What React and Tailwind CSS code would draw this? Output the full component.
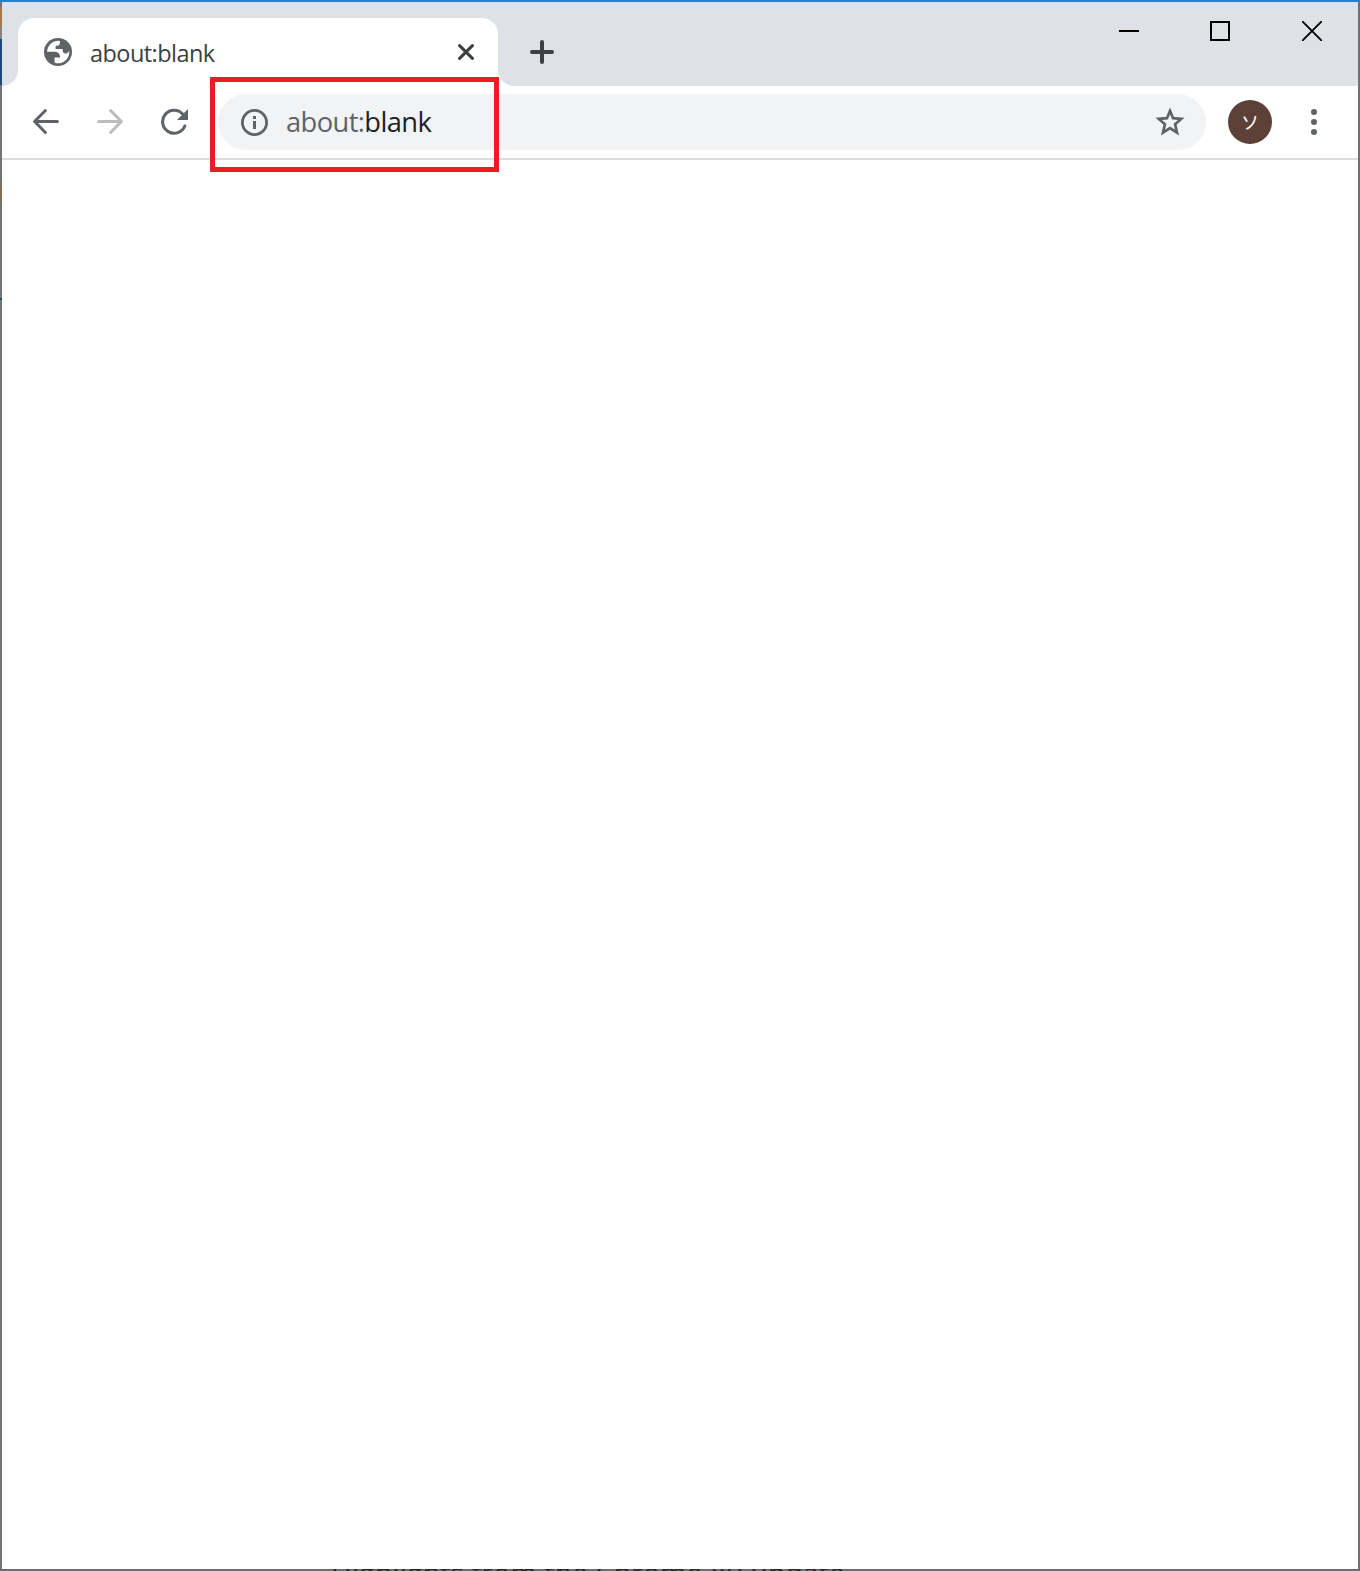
function Globe() {
  return (
    <svg className="size-7" viewBox="0 0 28 28">
      <circle cx="14" cy="14" r="14" fill="#5f6368" />
      <path
        d="M3 13.8H10C13.8 13.8 16.2 15.6 16.2 19.6H10.6V24.8A11.2 11.2 0 0 0 25.2 12.8C24.4 15 23 15.6 21.4 15.6C19.4 15.6 18.6 14.2 18.6 11H11.6V7.8H13.4C15.2 7.8 16 6.6 16 3A11.2 11.2 0 0 0 3 13.8Z"
        fill="#fff"
      />
    </svg>
  );
}

function TabStrip() {
  return (
    <div className="flex h-[84px] bg-[#dee1e6] text-[#3c4043]">
      <div className="w-4 bg-white">
        <div className="h-full rounded-br-[16px] bg-[#dee1e6]" />
      </div>
      <div className="mt-4 flex w-[480px] items-center rounded-t-[16px] bg-white pl-[26px] pr-6">
        <Globe />
        <span className="ml-[18px] flex-1 whitespace-nowrap pt-[2px] text-[23.5px] leading-8 tracking-[-0.55px]">about:blank</span>
        <svg className="size-4" viewBox="0 0 16 16" fill="none" stroke="currentColor" strokeWidth="3" strokeLinecap="round">
          <path d="M1.6 1.6 14.4 14.4M14.4 1.6 1.6 14.4" />
        </svg>
      </div>
      <div className="flex-1 bg-white">
        <div className="flex h-full justify-between rounded-bl-[16px] bg-[#dee1e6]">
          <svg className="ml-8 mt-[38px] size-6" viewBox="0 0 24 24" fill="none" stroke="currentColor" strokeWidth="4" strokeLinecap="round">
            <path d="M12 2v20M2 12h20" />
          </svg>
          <div className="mr-9 mt-[19px] flex h-5 items-center text-black">
            <div className="mr-[71px] h-[2px] w-5 bg-black" />
            <div className="mr-[72px] size-5 border-2 border-black" />
            <svg className="size-5" viewBox="0 0 20 20" fill="none" stroke="currentColor" strokeWidth="1.9">
              <path d="M0 0 20 20M20 0 0 20" />
            </svg>
          </div>
        </div>
      </div>
    </div>
  );
}

function Toolbar() {
  return (
    <div className="flex h-[74px] items-center border-b-2 border-[#dadce0] bg-white pl-[30px] text-[#5f6368]">
      <svg className="size-7" viewBox="0 0 28 28" fill="none" stroke="currentColor" strokeWidth="3" strokeLinecap="round" strokeLinejoin="round">
        <path d="M25.4 13.5H2.6M13.4 2.5 2.6 13.5l10.8 11" />
      </svg>
      <svg className="ml-9 size-7 text-[#babcbe]" viewBox="0 0 28 28" fill="none" stroke="currentColor" strokeWidth="3" strokeLinecap="round" strokeLinejoin="round">
        <path d="M2.6 13.5H25.4M14.6 2.5 25.4 13.5l-10.8 11" />
      </svg>
      <svg className="ml-9 size-7" viewBox="0 0 28 28" fill="none" stroke="currentColor" strokeWidth="3.1" strokeLinecap="round">
        <path d="M24.8 18A11.5 11.5 0 1 1 22.6 6" />
        <path d="M28 1V12H17Z" fill="currentColor" stroke="none" />
      </svg>
      <div className="ml-[30px] flex h-14 w-[988px] items-center rounded-full bg-[#f1f3f4] pl-[22px] pr-[21px]">
        <svg className="size-7" viewBox="0 0 28 28">
          <circle cx="14.5" cy="14.5" r="12.1" fill="none" stroke="currentColor" strokeWidth="2.8" />
          <path d="M13 8h3v3h-3zM13 13h3v8h-3z" fill="currentColor" />
        </svg>
        <div className="ml-[18px] flex-1 whitespace-nowrap text-[27.3px] leading-9 tracking-[-0.6px]">
          about:<span className="text-[#202124]">blank</span>
        </div>
        <svg className="size-[30px]" viewBox="0 0 30 30" fill="none" stroke="currentColor" strokeWidth="2.7">
          <path d="M15 3.9 18.1 11.2 26.2 11.9 20.1 17.2 22 25.7 15 21.2 8 25.7 9.9 17.2 3.8 11.9 11.9 11.2Z" />
        </svg>
      </div>
      <div className="ml-[22px] flex size-11 items-center justify-center rounded-full bg-[#5d4037] pb-[2px] font-['Noto_Sans_CJK_JP',sans-serif] text-[18px] leading-none text-white">ソ</div>
      <div className="ml-[39px] flex flex-col gap-1">
        <div className="size-1.5 rounded-full bg-current" />
        <div className="size-1.5 rounded-full bg-current" />
        <div className="size-1.5 rounded-full bg-current" />
      </div>
    </div>
  );
}

export default function App() {
  return (
    <div className="relative flex h-[1571px] w-[1360px] flex-col overflow-hidden bg-white font-['Open_Sans','Noto_Sans',sans-serif]">
      <div className="h-[2px] shrink-0 bg-[#1883d7]" />
      <div className="flex flex-1">
        <div className="flex w-[2px] flex-col bg-[#747474]">
          <div className="h-[5px]" />
          <div className="h-[20px] bg-[#a07a4c]" />
          <div className="h-[12px] bg-[#858585]" />
          <div className="h-[46px] bg-[#1f4a75]" />
          <div className="mt-[97px] h-[20px] bg-[#85705a]" />
          <div className="mt-[96px] h-[2px] bg-[#174f82]" />
        </div>
        <div className="flex w-[1356px] flex-col bg-white">
          <TabStrip />
          <Toolbar />
        </div>
        <div className="w-[2px] bg-[#6f7274]" />
      </div>
      <div className="h-[2px] shrink-0 overflow-hidden bg-[#6e6c6c] pl-[331px] text-[#272424]">
        <div className="-mt-[13px] whitespace-nowrap text-[28px] leading-8 tracking-[0.33px]">Highlights from the Chrome 80 update</div>
      </div>
      <div className="absolute left-[210px] top-[77px] h-[95px] w-[289px] border-[5px] border-[#ed1c24]" />
    </div>
  );
}
